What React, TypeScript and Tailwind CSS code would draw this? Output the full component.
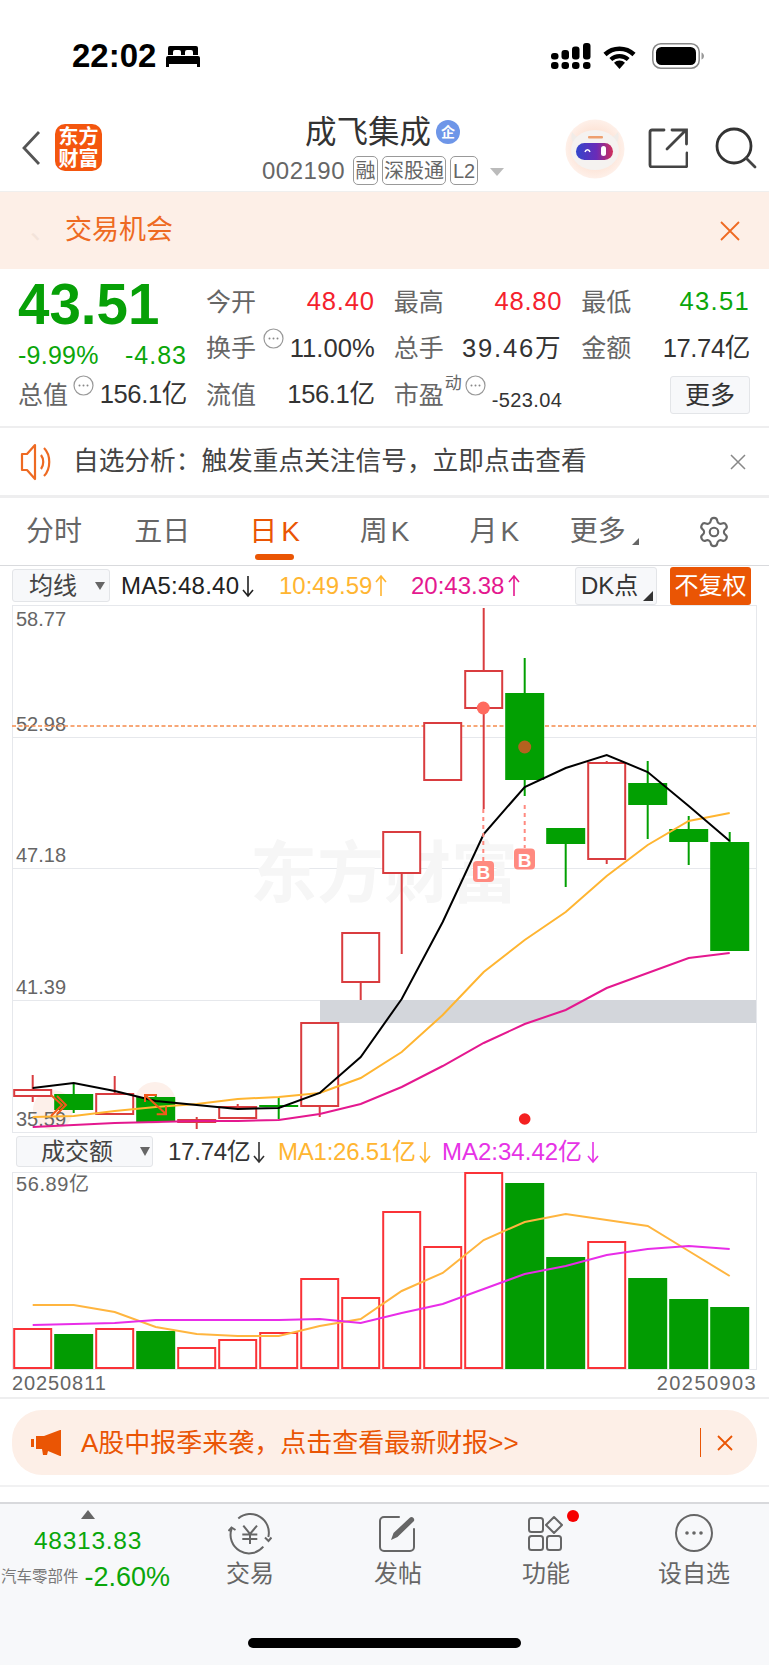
import React from "react";
import { Settings } from "lucide-react";

const X = (i: number) => 32.7 + 41 * i;
const pts = (a: number[]) => a.map((y, i) => `${X(i).toFixed(1)},${y}`).join(" ");

type C = { r: boolean; t: number; b: number; wt: number; wb: number };
const candles: C[] = [
  { r: true, t: 1090, b: 1096, wt: 1075, wb: 1102 },
  { r: false, t: 1094, b: 1110, wt: 1084, wb: 1113 },
  { r: true, t: 1094, b: 1114, wt: 1076, wb: 1115 },
  { r: false, t: 1097, b: 1122, wt: 1094, wb: 1122 },
  { r: true, t: 1120, b: 1122, wt: 1117, wb: 1129 },
  { r: true, t: 1107, b: 1118, wt: 1104, wb: 1118 },
  { r: false, t: 1105, b: 1106, wt: 1097, wb: 1119 },
  { r: true, t: 1023, b: 1106, wt: 1023, wb: 1117 },
  { r: true, t: 933, b: 982, wt: 933, wb: 1000 },
  { r: true, t: 832, b: 873, wt: 832, wb: 954 },
  { r: true, t: 723, b: 780, wt: 723, wb: 780 },
  { r: true, t: 671, b: 708, wt: 608, wb: 809 },
  { r: false, t: 693, b: 780, wt: 658, wb: 796 },
  { r: false, t: 828, b: 844, wt: 828, wb: 887 },
  { r: true, t: 763, b: 859, wt: 761, wb: 864 },
  { r: false, t: 783, b: 805, wt: 761, wb: 839 },
  { r: false, t: 829, b: 842, wt: 816, wb: 865 },
  { r: false, t: 842, b: 951, wt: 832, wb: 951 },
];
const ma5 = [1088, 1083, 1091, 1101, 1105, 1109, 1108, 1093, 1057, 999, 922, 834, 787, 768, 755, 772, 806, 841];
const ma10 = [1117, 1116, 1111, 1107, 1104, 1099, 1097, 1093, 1078, 1052, 1015, 972, 940, 912, 876, 845, 821, 813];
const ma20 = [1127, 1125, 1123, 1122, 1121, 1121, 1120, 1114, 1104, 1087, 1066, 1043, 1024, 1010, 988, 973, 958, 953];

const vols: [boolean, number][] = [
  [true, 1329], [false, 1334], [true, 1329], [false, 1331], [true, 1348], [true, 1340],
  [true, 1333], [true, 1279], [true, 1298], [true, 1212], [true, 1247], [true, 1173],
  [false, 1183], [false, 1257], [true, 1242], [false, 1278], [false, 1299], [false, 1307],
];
const v1 = [1305, 1305, 1312, 1327, 1334, 1336, 1336, 1326, 1319, 1291, 1273, 1240, 1222, 1214, 1220, 1226, 1251, 1276];
const v2 = [1325, 1324, 1323, 1320, 1320, 1320, 1320, 1319, 1323, 1313, 1304, 1289, 1274, 1266, 1255, 1249, 1246, 1249];

const Dots = () => (
  <svg width="21" height="21" viewBox="0 0 21 21" className="shrink-0">
    <circle cx="10.5" cy="10.5" r="9.5" fill="none" stroke="#999" strokeWidth="1.2" />
    <circle cx="6.5" cy="10.5" r="1" fill="#888" />
    <circle cx="10.5" cy="10.5" r="1" fill="#888" />
    <circle cx="14.5" cy="10.5" r="1" fill="#888" />
  </svg>
);

const Arrow = ({ up }: { up?: boolean }) => (
  <svg width="14" height="24" viewBox="0 0 14 24" className="shrink-0">
    {up ? (
      <path d="M7 22V2M2 8l5-6 5 6" fill="none" stroke="currentColor" strokeWidth="1.600" />
    ) : (
      <path d="M7 2v20M2 16l5 6 5-6" fill="none" stroke="currentColor" strokeWidth="1.600" />
    )}
  </svg>
);

const Label = ({ children }: { children: React.ReactNode }) => (
  <span className="shrink-0 whitespace-nowrap text-[25px] leading-none text-[#666]">{children}</span>
);
const Val = ({ children, c = "text-[#333]", t = "tracking-[0.03em]" }: { children: React.ReactNode; c?: string; t?: string }) => (
  <span className={`whitespace-nowrap text-[25.6px] leading-none ${t} ${c}`}>{children}</span>
);
const Cell = ({ children }: { children: React.ReactNode }) => (
  <div className="flex h-[46.5px] items-center justify-between">{children}</div>
);
const Badge = ({ children, w }: { children: React.ReactNode; w: string }) => (
  <span className={`flex h-[29px] items-center justify-center rounded-[5px] border border-[#999] text-[20px] leading-none text-[#666] ${w}`}>{children}</span>
);
const Tab = ({ children, active }: { children: React.ReactNode; active?: boolean }) => (
  <div className={`relative flex h-full items-center justify-center text-[28px] leading-none ${active ? "text-[#ea5504]" : "text-[#666]"}`}>{children}</div>
);

export default function App() {
  return (
    <div className="flex h-[1665px] w-[769px] flex-col overflow-hidden bg-white font-['Liberation_Sans','Noto_Sans_CJK_SC',sans-serif]">
      {/* status bar */}
      <div className="flex h-[100px] shrink-0 items-start justify-between pl-[72px] pr-[65px] pt-[38px]">
        <div className="flex items-center gap-[10px]">
          <span className="text-[33px] font-bold leading-[36px] text-black">22:02</span>
          <svg width="34" height="24" viewBox="0 0 34 24">
            <path d="M4 2h26a2 2 0 0 1 2 2v7h-5V8a2 2 0 0 0-2-2h-4a2 2 0 0 0-2 2v3h-4V8a2 2 0 0 0-2-2H9a2 2 0 0 0-2 2v3H2V4a2 2 0 0 1 2-2z" fill="#000" />
            <path d="M0 14a2 2 0 0 1 2-2h30a2 2 0 0 1 2 2v9h-3v-3H3v3H0z" fill="#000" />
          </svg>
        </div>
        <div className="flex items-center gap-[14px] pt-[5px]">
          <svg width="40" height="26" viewBox="0 0 40 26" className="-mr-[2px]">
            <rect x="0" y="10" width="7.5" height="6.5" rx="3" fill="#000" /><rect x="0" y="19" width="7.5" height="7" rx="3" fill="#000" />
            <rect x="10.5" y="7" width="7.5" height="9.5" rx="3" fill="#000" /><rect x="10.5" y="19" width="7.5" height="7" rx="3" fill="#000" />
            <rect x="21" y="3.5" width="7.5" height="13" rx="3" fill="#000" /><rect x="21" y="19" width="7.5" height="7" rx="3" fill="#000" />
            <rect x="32" y="0" width="7.5" height="16.5" rx="3" fill="#000" /><rect x="32" y="19" width="7.5" height="7" rx="3" fill="#000" />
          </svg>
          <svg width="33" height="25" viewBox="0 0 33 25" className="mr-[2px]">
            <path d="M16.5 25l-5.5-6.3a8 8 0 0 1 11 0z" fill="#000" />
            <path d="M2 10.500a21 21 0 0 1 29 0" fill="none" stroke="#000" strokeWidth="4.500" />
            <path d="M7.800 15.500a13 13 0 0 1 17.400 0" fill="none" stroke="#000" strokeWidth="4.200" />
          </svg>
          <svg width="52" height="26" viewBox="0 0 52 26">
            <rect x="0.800" y="0.800" width="46.400" height="24.400" rx="8" fill="none" stroke="#888" strokeWidth="1.500" />
            <rect x="4" y="4" width="40" height="18" rx="5.500" fill="#000" />
            <path d="M49.500 9.500c1.500.5 2.500 2 2.500 3.500s-1 3-2.500 3.500z" fill="#999" />
          </svg>
        </div>
      </div>

      {/* header */}
      <div className="flex h-[91px] shrink-0 items-start">
        <div className="flex w-[240px] shrink-0 items-center pl-[21px] pt-[24px]">
          <svg width="20" height="36" viewBox="0 0 20 36">
            <path d="M18 2L3 18l15 16" fill="none" stroke="#555" strokeWidth="2.800" />
          </svg>
          <div className="ml-[14px] flex h-[47px] w-[47px] flex-col items-center justify-center rounded-[10px] bg-[#f4560e] text-[20px] font-bold leading-[22px] text-white">
            <span>东方</span>
            <span>财富</span>
          </div>
        </div>
        <div className="flex w-[300px] shrink-0 flex-col pt-[14px]">
          <div className="flex items-center pl-[65px]">
            <span className="text-[31.5px] leading-[36px] text-[#333]">成飞集成</span>
            <span className="ml-[5px] flex h-[24px] w-[24px] items-center justify-center rounded-full bg-[#6e96e8] text-[14px] font-bold leading-none text-white">企</span>
          </div>
          <div className="mt-[6px] flex items-center pl-[22px]">
            <span className="w-[84px] text-[24px] leading-none tracking-[0.02em] text-[#666]">002190</span>
            <div className="ml-[7px] flex gap-[4px]">
              <Badge w="w-[25px]">融</Badge>
              <Badge w="w-[64px]">深股通</Badge>
              <Badge w="w-[28px]">L2</Badge>
            </div>
            <svg width="14" height="8" viewBox="0 0 14 8" className="ml-[12px] mt-[3px]"><path d="M0 0h14L7 8z" fill="#bbb" /></svg>
          </div>
        </div>
        <div className="flex grow items-start pl-[25px] pt-[19px]">
          <svg width="60" height="60" viewBox="0 0 60 60" className="shrink-0">
            <defs>
              <radialGradient id="halo" cx="0.5" cy="0.5" r="0.5">
                <stop offset="0.55" stopColor="#fde2d4" />
                <stop offset="1" stopColor="#fef0e9" />
              </radialGradient>
              <linearGradient id="visor" x1="0" x2="1" y1="0" y2="0">
                <stop offset="0" stopColor="#3246cc" />
                <stop offset="0.55" stopColor="#6a2bb8" />
                <stop offset="1" stopColor="#d12f5a" />
              </linearGradient>
            </defs>
            <circle cx="30" cy="30" r="29.500" fill="url(#halo)" />
            <path d="M8 24c-2-4-2-8-1-11 2 3 5 5 8 6zM52 24c2-4 2-8 1-11-2 3-5 5-8 6z" fill="#f1ece8" />
            <ellipse cx="30" cy="31" rx="24" ry="20" fill="#f5f2f0" />
            <rect x="23" y="17" width="15" height="2.500" rx="1" fill="#eea070" />
            <rect x="11" y="24" width="37" height="17" rx="8.500" fill="url(#visor)" />
            <path d="M20 33c1-3 4-3 5 0" fill="none" stroke="#fff" strokeWidth="1.500" />
            <rect x="36" y="27" width="5" height="10" rx="2.500" fill="#fff" />
          </svg>
          <svg width="40" height="40" viewBox="0 0 40 40" className="ml-[23px] mt-[9px] shrink-0">
            <path d="M16 2H4a2 2 0 0 0-2 2v33a2 2 0 0 0 2 2h33a2 2 0 0 0 2-2V25" fill="none" stroke="#444" strokeWidth="2.800" strokeLinecap="round" />
            <path d="M19 21L38 2M24 2h14.500v14" fill="none" stroke="#444" strokeWidth="2.800" strokeLinecap="round" />
          </svg>
          <svg width="42" height="42" viewBox="0 0 42 42" className="ml-[27px] mt-[8px] shrink-0">
            <circle cx="19" cy="19" r="17" fill="none" stroke="#333" strokeWidth="2.800" />
            <path d="M31 31l9 9" stroke="#444" strokeWidth="2.800" strokeLinecap="round" />
          </svg>
        </div>
      </div>

      {/* banner */}
      <div className="flex h-[78px] shrink-0 items-center justify-between border-t border-[#f0efee] bg-[#fdefe7] pl-[30px] pr-[29px]">
        <div className="flex items-center">
          <span className="w-[35px] text-[27px] leading-none text-[#f3e3da]">、</span>
          <span className="text-[27px] leading-none text-[#ee6a22]">交易机会</span>
        </div>
        <svg width="20" height="20" viewBox="0 0 20 20"><path d="M1 1l18 18M19 1L1 19" stroke="#ee6a22" strokeWidth="1.800" /></svg>
      </div>

      {/* quote */}
      <div className="flex h-[159px] shrink-0 border-b-2 border-[#eeeeef]">
        <div className="flex w-[206px] shrink-0 flex-col pl-[18px] pr-[19px]">
          <div className="flex h-[72px] items-center text-[56.500px] font-bold leading-none text-[#07a007]">43.51</div>
          <div className="flex h-[28px] items-center justify-between text-[25px] leading-none text-[#0aa60a]">
            <span className="tracking-[0.01em]">-9.99%</span>
            <span className="tracking-[0.04em]">-4.83</span>
          </div>
          <div className="flex h-[52px] items-center justify-between">
            <div className="flex shrink-0 items-start">
              <Label>总值</Label>
              <span className="ml-[5px] -mt-[8px]"><Dots /></span>
            </div>
            <Val t="tracking-[-0.015em]">156.1亿</Val>
          </div>
        </div>
        <div className="grid grow grid-cols-3 gap-x-[19px] pr-[19px] pt-[10px]">
          <div className="flex flex-col">
            <Cell><Label>今开</Label><Val c="text-[#f5222d]">48.40</Val></Cell>
            <Cell>
              <div className="flex items-start"><Label>换手</Label><span className="ml-[7px] -mt-[8px]"><Dots /></span></div>
              <Val t="tracking-[0]">11.00%</Val>
            </Cell>
            <Cell><Label>流值</Label><Val t="tracking-[-0.015em]">156.1亿</Val></Cell>
          </div>
          <div className="flex flex-col">
            <Cell><Label>最高</Label><Val c="text-[#f5222d]">48.80</Val></Cell>
            <Cell><Label>总手</Label><Val t="tracking-[0.07em]">39.46万</Val></Cell>
            <Cell>
              <div className="flex items-start">
                <Label>市盈</Label>
                <span className="ml-[1px] -mt-[8px] text-[17px] leading-none text-[#666]">动</span>
                <span className="ml-[3px] -mt-[8px]"><Dots /></span>
              </div>
              <span className="mt-[10px] text-[20px] leading-none tracking-[0.02em] text-[#333]">-523.04</span>
            </Cell>
          </div>
          <div className="flex flex-col">
            <Cell><Label>最低</Label><Val c="text-[#0aa60a]" t="tracking-[0.05em]">43.51</Val></Cell>
            <Cell><Label>金额</Label><Val t="tracking-[-0.015em]">17.74亿</Val></Cell>
            <div className="flex h-[46.5px] items-center justify-end">
              <div className="flex h-[38px] w-[80px] items-center justify-center rounded-[3px] border border-[#e3e5e8] bg-[#f7f8fa] text-[25px] leading-none text-[#333]">更多</div>
            </div>
          </div>
        </div>
      </div>

      {/* notice */}
      <div className="flex h-[70px] shrink-0 items-center border-b-[3px] border-[#eeeeef] pl-[20px] pr-[23px]">
        <svg width="33" height="38" viewBox="0 0 33 38" className="shrink-0">
          <path d="M15 2L7 11H2v16h5l8 9z" fill="none" stroke="#ee6a22" strokeWidth="2.200" strokeLinejoin="round" />
          <path d="M21 12c3 4 3 10 0 14M24 5c7 7 7 21 0 28" fill="none" stroke="#ee6a22" strokeWidth="2.200" />
        </svg>
        <span className="ml-[20px] grow text-[25.700px] leading-none text-[#444]">自选分析：触发重点关注信号，立即点击查看</span>
        <svg width="16" height="16" viewBox="0 0 16 16"><path d="M1 1l14 14M15 1L1 15" stroke="#888" strokeWidth="1.500" /></svg>
      </div>

      {/* period tabs */}
      <div className="grid h-[68px] shrink-0 grid-cols-7 border-b border-[#d9dadd]">
        <Tab><span className="-ml-[2px]">分时</span></Tab>
        <Tab><span className="-ml-[5px]">五日</span></Tab>
        <Tab active>
          <span className="flex gap-[4px]"><span>日</span><span>K</span></span>
          <span className="absolute bottom-[5px] left-[35px] h-[6px] w-[39px] rounded-full bg-[#ea5504]" />
        </Tab>
        <Tab><span className="flex gap-[3px]"><span>周</span><span>K</span></span></Tab>
        <Tab><span className="flex gap-[3px]"><span>月</span><span>K</span></span></Tab>
        <Tab>
          <span>更多</span>
          <svg width="7" height="7" viewBox="0 0 7 7" className="ml-[6px] mt-[20px]"><path d="M7 0v7H0z" fill="#666" /></svg>
        </Tab>
        <div className="flex items-center justify-center">
          <Settings size={34} strokeWidth={1.500} color="#666" />
        </div>
      </div>

      {/* MA toolbar */}
      <div className="flex h-[39px] shrink-0 items-center text-[24px] leading-none">
        <div className="ml-[12px] flex h-[33px] w-[98px] items-center rounded-[3px] border border-[#e3e5e8] bg-[#f7f8fa] pl-[16px]">
          <span className="text-[#444]">均线</span>
          <svg width="10" height="10" viewBox="0 0 10 10" className="ml-[18px]"><path d="M0 1h10L5 9z" fill="#666" /></svg>
        </div>
        <span className="ml-[11px] flex w-[158px] items-center gap-[2px] whitespace-nowrap tracking-[0.01em] text-[#222]">MA5:48.40<Arrow /></span>
        <span className="flex w-[132px] items-center gap-[2px] whitespace-nowrap text-[#ffb531]">10:49.59<Arrow up /></span>
        <span className="flex w-[164px] items-center gap-[3px] whitespace-nowrap text-[#e4188f]">20:43.38<Arrow up /></span>
        <div className="relative flex h-[38px] w-[82px] items-center rounded-[3px] border border-[#e3e5e8] bg-[#f7f8fa] pl-[5px] text-[#333]">
          DK点
          <svg width="10" height="10" viewBox="0 0 10 10" className="absolute bottom-[3px] right-[3px]"><path d="M10 0v10H0z" fill="#333" /></svg>
        </div>
        <div className="ml-[13px] flex h-[38px] w-[81px] items-center justify-center rounded-[3px] bg-[#ea5504] text-white">不复权</div>
      </div>

      {/* K chart */}
      <div className="h-[528px] shrink-0 pl-[12px]">
        <svg width="745" height="528" viewBox="12 605 745 528" className="block">
          <rect x="12.500" y="605.500" width="744" height="527" fill="#fff" stroke="#e6e8ec" />
          <path d="M12 737.500h745M12 868.500h745M12 1000.500h745" stroke="#e6e8ec" />
          <text x="250" y="897" className="fill-[#f6f6f6] text-[67px] font-bold">东方财富</text>
          <rect x="320" y="1000" width="436" height="23" fill="#d3d6db" />
          <circle cx="53" cy="1110" r="20" fill="#fdf0ea" />
          <circle cx="155" cy="1103" r="21" fill="#fdf0ea" />
          <g className="fill-[#666] text-[20px]">
            <text x="16" y="626">58.77</text>
            <text x="16" y="731">52.98</text>
            <text x="16" y="862">47.18</text>
            <text x="16" y="994">41.39</text>
            <text x="16" y="1126">35.59</text>
          </g>
          <path d="M12 726h744" stroke="#f58a4b" strokeWidth="1.500" strokeDasharray="4 2.500" />
          {candles.map((c, i) => {
            const x = X(i);
            const col = c.r ? "#d93c3f" : "#02a002";
            const w = c.r ? 37 : 39;
            return (
              <g key={i}>
                <line x1={x} x2={x} y1={c.wt} y2={c.t} stroke={col} strokeWidth="2" />
                <line x1={x} x2={x} y1={c.b} y2={c.wb} stroke={col} strokeWidth="2" />
                {c.r ? (
                  <rect x={x - w / 2} y={c.t} width={w} height={c.b - c.t} fill={i === 4 ? "#e0245e" : "#fff"} stroke={col} strokeWidth="2" />
                ) : (
                  <rect x={x - w / 2} y={c.t} width={w} height={Math.max(c.b - c.t, 2)} fill={col} />
                )}
              </g>
            );
          })}
          <polyline points={pts(ma20)} fill="none" stroke="#e4188f" strokeWidth="2" />
          <polyline points={pts(ma10)} fill="none" stroke="#ffb531" strokeWidth="2" />
          <polyline points={pts(ma5)} fill="none" stroke="#000" strokeWidth="2" />
          <path d="M51 1095l11 10-11 11M57 1096l9 9-9 9" fill="none" stroke="#f0591a" strokeWidth="2" />
          <path d="M156.700 1095H145v7M145 1095l21 19M156.700 1114.300H166v-8" fill="none" stroke="#f0591a" strokeWidth="2" />
          <path d="M483.300 809v52M524.700 805v43" stroke="#ff8a80" strokeWidth="2" strokeDasharray="4 4" />
          <circle cx="483.300" cy="708" r="6.500" fill="#ff6a5e" />
          <circle cx="524.700" cy="747" r="6.500" fill="#b4621f" />
          <rect x="473" y="861" width="21" height="21" rx="4" fill="#ff8a80" />
          <rect x="514" y="848.500" width="21" height="21" rx="4" fill="#ff8a80" />
          <text x="483.300" y="879" textAnchor="middle" className="fill-white text-[19px] font-bold">B</text>
          <text x="524.700" y="866.500" textAnchor="middle" className="fill-white text-[19px] font-bold">B</text>
          <circle cx="524.700" cy="1119" r="5.800" fill="#f42020" />
        </svg>
      </div>

      {/* volume toolbar */}
      <div className="flex h-[39px] shrink-0 items-center pb-[2px] text-[24px] leading-none">
        <div className="ml-[16px] flex h-[31px] w-[137px] items-center rounded-[3px] border border-[#e3e5e8] bg-[#f7f8fa] pl-[24px]">
          <span className="text-[#444]">成交额</span>
          <svg width="10" height="9" viewBox="0 0 10 9" className="ml-[27px]"><path d="M0 0h10L5 9z" fill="#666" /></svg>
        </div>
        <span className="ml-[15px] flex w-[110px] items-center gap-[1px] whitespace-nowrap tracking-[-0.01em] text-[#333]">17.74亿<Arrow /></span>
        <span className="flex w-[164px] items-center gap-[2px] whitespace-nowrap tracking-[-0.01em] text-[#ffb531]">MA1:26.51亿<Arrow /></span>
        <span className="flex items-center gap-[4px] whitespace-nowrap text-[#e633e6]">MA2:34.42亿<Arrow /></span>
      </div>

      {/* volume chart */}
      <div className="h-[198px] shrink-0 pl-[12px]">
        <svg width="745" height="198" viewBox="12 1172 745 198" className="block">
          <rect x="12.500" y="1172.500" width="744" height="197" fill="#fff" stroke="#e6e8ec" />
          <text x="16" y="1191" className="fill-[#666] text-[20px] tracking-[0.03em]">56.89亿</text>
          {vols.map(([r, t], i) =>
            r ? (
              <rect key={i} x={X(i) - 18.500} y={t} width={37} height={1369 - t - 1} fill="#fff" stroke="#fa3237" strokeWidth="2" />
            ) : (
              <rect key={i} x={X(i) - 19.500} y={t} width={39} height={1369 - t} fill="#029c02" />
            )
          )}
          <polyline points={pts(v1)} fill="none" stroke="#ffb53f" strokeWidth="2" />
          <polyline points={pts(v2)} fill="none" stroke="#e82de8" strokeWidth="2" />
        </svg>
      </div>

      {/* dates */}
      <div className="flex h-[29px] shrink-0 items-center justify-between border-b-2 border-[#eeeeef] pb-[2px] pl-[12px] pr-[12px] text-[20px] leading-none text-[#666]">
        <span className="tracking-[0.045em]">20250811</span>
        <span className="tracking-[0.07em]">20250903</span>
      </div>

      {/* promo pill */}
      <div className="flex h-[88px] shrink-0 flex-col border-b-[2px] border-[#f1f1f2] px-[12px] pt-[11px]">
        <div className="flex h-[65px] items-center rounded-[30px] bg-[#fdefe7] pl-[19px] pr-[24px]">
          <svg width="31" height="26" viewBox="0 0 31 26" className="shrink-0">
            <path d="M0 9h3v8H0zM5 6h8L29 0h1v26h-1l-12-5-1 4h-4l-1-6H5z" fill="#ea5504" />
          </svg>
          <span className="ml-[19px] grow text-[26px] leading-none text-[#ea5504]">A股中报季来袭，点击查看最新财报&gt;&gt;</span>
          <span className="h-[29px] w-[1.500px] bg-[#ea5504]" />
          <svg width="16" height="16" viewBox="0 0 16 16" className="ml-[16px]"><path d="M1 1l14 14M15 1L1 15" stroke="#ea5504" strokeWidth="1.800" /></svg>
        </div>
      </div>

      <div className="h-[15px] shrink-0" />

      {/* bottom bar */}
      <div className="relative flex grow flex-col border-t-2 border-[#d8d9dc] bg-[#f7f8fa]">
        <div className="flex h-[92px] items-start">
          <div className="flex w-[176px] shrink-0 flex-col items-center pt-[6px]">
            <svg width="14" height="9" viewBox="0 0 14 9"><path d="M7 0l7 9H0z" fill="#666" /></svg>
            <span className="mt-[10px] text-[24.500px] leading-none tracking-[0.03em] text-[#0aa60a]">48313.83</span>
            <div className="mt-[10px] flex w-full items-center pl-[1px]">
              <span className="text-[15.500px] leading-none text-[#777]">汽车零部件</span>
              <span className="ml-[6px] text-[27px] leading-none text-[#0aa60a]">-2.60%</span>
            </div>
          </div>
          <div className="grid grow grid-cols-4 pr-[1px] pt-[8px]">
            <div className="flex flex-col items-center">
              <svg width="44" height="44" viewBox="0 0 44 44">
                <path d="M10.300 6.500A18.500 18.500 0 0 1 40.300 25" fill="none" stroke="#666" strokeWidth="2" />
                <path d="M35.300 34.700A18.500 18.500 0 0 1 3.700 16.500" fill="none" stroke="#666" strokeWidth="2" />
                <path d="M37 25.500l3.500 3.500 3-3.500M0.500 19l3-3.500 4 2.500" fill="none" stroke="#666" strokeWidth="2" />
                <path d="M15.300 13.700L22 22l7-8.300M22 22v10M14.300 22.500h15M14.300 27h15" fill="none" stroke="#666" strokeWidth="2" />
              </svg>
              <span className="mt-[6px] text-[24px] leading-none text-[#666]">交易</span>
            </div>
            <div className="flex flex-col items-center">
              <svg width="44" height="44" viewBox="0 0 44 44">
                <path d="M23 5H8a4 4 0 0 0-4 4v26a4 4 0 0 0 4 4h26a4 4 0 0 0 4-4V17" fill="none" stroke="#666" strokeWidth="2" strokeLinecap="round" />
                <path d="M15 28l2.500-7L33.500 6q2-2 4 0q1.500 2 0 3.500L21.500 25z" fill="#666" />
              </svg>
              <span className="mt-[6px] text-[24px] leading-none text-[#666]">发帖</span>
            </div>
            <div className="relative flex flex-col items-center">
              <svg width="44" height="44" viewBox="0 0 44 44">
                <rect x="5" y="6" width="14" height="14" rx="2.500" fill="none" stroke="#666" strokeWidth="2" />
                <rect x="5" y="24" width="14" height="14" rx="2.500" fill="none" stroke="#666" strokeWidth="2" />
                <rect x="23" y="24" width="14" height="14" rx="2.500" fill="none" stroke="#666" strokeWidth="2" />
                <path d="M30 5l8 8-8 8-8-8z" fill="none" stroke="#666" strokeWidth="2" strokeLinejoin="round" />
              </svg>
              <span className="mt-[6px] text-[24px] leading-none text-[#666]">功能</span>
              <span className="absolute left-[95px] -top-[2px] h-[12px] w-[12px] rounded-full bg-[#f60000]" />
            </div>
            <div className="flex flex-col items-center">
              <svg width="44" height="44" viewBox="0 0 44 44">
                <circle cx="22" cy="21" r="18" fill="none" stroke="#666" strokeWidth="2" />
                <circle cx="15" cy="21" r="1.800" fill="#666" />
                <circle cx="22" cy="21" r="1.800" fill="#666" />
                <circle cx="29" cy="21" r="1.800" fill="#666" />
              </svg>
              <span className="mt-[6px] text-[24px] leading-none text-[#666]">设自选</span>
            </div>
          </div>
        </div>
        <div className="flex justify-center pt-[42px]">
          <div className="h-[10px] w-[273px] rounded-full bg-black" />
        </div>
      </div>
    </div>
  );
}
